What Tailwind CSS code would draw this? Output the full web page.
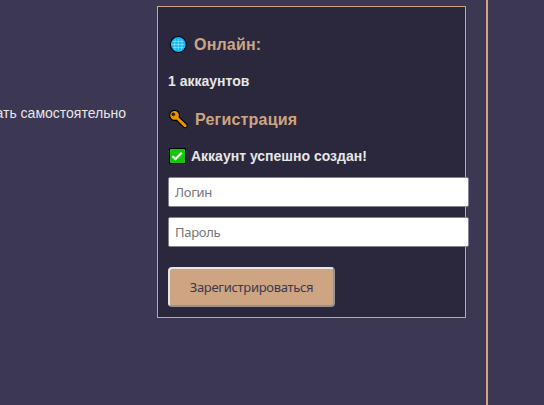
<!DOCTYPE html>
<html lang="ru">
<head>
    <meta charset="UTF-8">
    <meta name="viewport" content="width=device-width, initial-scale=1.0">
    <title>Регистрация</title>
    <script src="https://cdn.jsdelivr.net/npm/@tailwindcss/browser@4"></script>
</head>
<body class="bg-[#3c3854] h-screen overflow-hidden font-['Liberation_Sans',Arial,sans-serif] text-[#e6e6e6]">
    <div class="flex items-start w-[488px] h-full border-r-2 border-[#cda583] pt-1.5">
        <!-- Content -->
        <main class="w-[157px] shrink-0 flex justify-end pr-[31px] pt-[97px] overflow-hidden">
            <p class="text-sm leading-5 whitespace-nowrap">ать самостоятельно</p>
        </main>

        <!-- Sidebar -->
        <aside class="w-[309px] h-[312px] shrink-0 bg-[#2b283d] border border-[#cda583] px-2.5 pt-[27px]">
            <h3 class="flex items-center h-5 text-base font-bold text-[#cda583] tracking-[0.2px]">
                <svg class="w-5 h-5 mr-1.5 shrink-0" viewBox="0 0 20 20" fill="none">
                    <circle cx="10.3" cy="10.5" r="8" fill="#10b8f8" stroke="#000" stroke-width="1.2"/>
                    <path d="M5 7.500h10.600M4 10.500h12.600M5 13.500h10.600M10.300 5v11M7.400 5.500c-1.300 3-1.300 7 0 10M13.200 5.500c1.300 3 1.300 7 0 10" stroke="#a5e8ff" stroke-width="0.6"/>
                </svg>
                <span class="pt-0.5">Онлайн:</span>
            </h3>
            <p class="mt-[17px] h-5 leading-5 text-sm font-bold">1 аккаунтов</p>
            <h3 class="flex items-center h-5 mt-[18px] text-base font-bold text-[#cda583] tracking-[0.2px]">
                <svg class="w-5 h-5 mr-[7px] shrink-0" viewBox="0 0 20 20">
                    <path fill="#e69500" stroke="#000" stroke-width="1.1" stroke-linejoin="round" d="M3.500 2.400C5.500 .8 8.800 1 10.500 3.400c1 1.500 1.100 3.100.600 4.600l7.700 7.400c.800 1 .500 3-1.300 3.300-.8.100-1.500-.1-2-.600l-7-6.900C5.700 11.700 3 10.700 2.100 8.200c-.8-2.200-.2-4.400 1.400-5.800z"/>
                    <circle cx="5.300" cy="5.300" r="1.400" fill="#2b283d" stroke="#000" stroke-width="0.6"/>
                </svg>
                <span class="pt-0.5">Регистрация</span>
            </h3>
            <p class="flex items-center mt-[17px] h-5 leading-5 text-sm font-bold whitespace-nowrap">
                <svg class="w-[18px] h-[18px] mr-[5px] shrink-0" viewBox="0 0 18 18" fill="none">
                    <path d="M1.500 1.500h16v15h-16z" fill="#16c60c" stroke="#000"/>
                    <path d="M4.500 9.300l3 2.700 6.300-6.300" stroke="#fff" stroke-width="2.200"/>
                </svg>
                Аккаунт успешно создан!
            </p>
            <form class="mt-[11px] font-['Noto_Sans',sans-serif] text-[13px]">
                <input type="text" placeholder="Логин" class="block w-[301px] h-[30px] bg-white border border-[#858494] rounded-[2px] px-1.5 tracking-[-0.3px] placeholder:text-[#757575]">
                <input type="password" placeholder="Пароль" class="block w-[301px] h-[30px] mt-2.5 bg-white border border-[#858494] rounded-[2px] px-1.5 tracking-[-0.3px] placeholder:text-[#757575]">
                <button type="button" class="block w-[167px] h-10 mt-5 pt-0.5 bg-[#cda583] text-[#3c3854] tracking-[-0.3px] rounded-[4px] border-2 border-t-[#e6e6e6] border-l-[#e6e6e6] border-b-[#949494] border-r-[#949494]">Зарегистрироваться</button>
            </form>
        </aside>
    </div>
</body>
</html>
